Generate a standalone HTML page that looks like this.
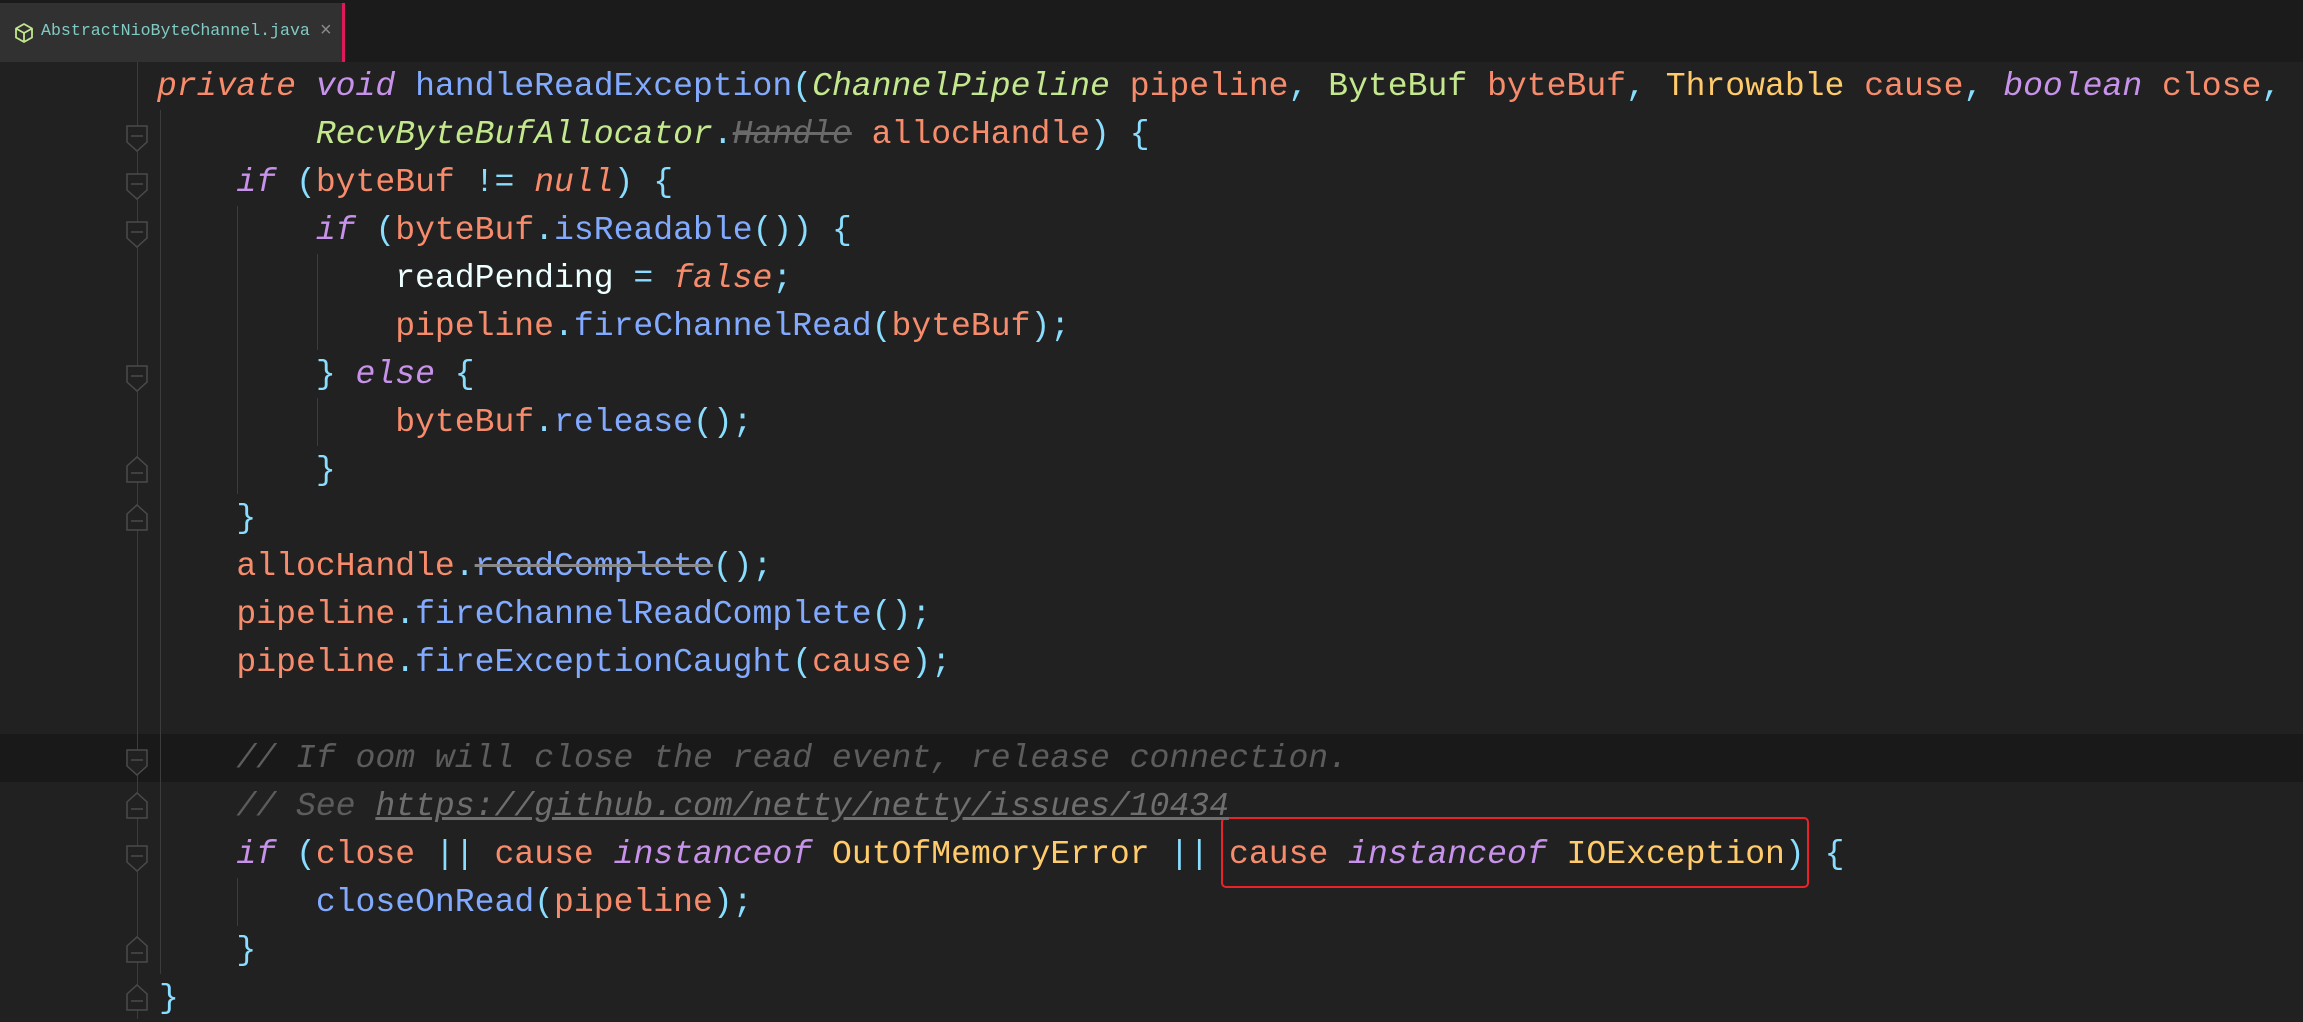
<!DOCTYPE html>
<html><head><meta charset="utf-8"><style>
html,body{margin:0;padding:0;width:2303px;height:1019px;overflow:hidden;background:#212121;}
.tabbar{position:absolute;left:0;top:0;width:2303px;height:62px;background:#1b1b1b;}
.tab{position:absolute;left:0;top:3px;width:342px;height:59px;background:#313131;border-right:3px solid #e0195a;}
.tab .t{position:absolute;left:41px;top:18px;font:16.6px "Liberation Mono",monospace;color:#80cbc4;}
.tab .x{position:absolute;left:320px;top:16px;font:20px "Liberation Sans",sans-serif;color:#8a8a8a;}
.code{position:absolute;left:157px;top:62px;font:33.1px "Liberation Mono",monospace;}
.l{position:absolute;left:0;height:48px;line-height:48px;white-space:pre;}
.cur{position:absolute;left:0;top:734px;width:2303px;height:48px;background:#191919;}
.o{color:#f78c6c}.p{color:#c792ea}.b{color:#82aaff}.c{color:#89ddff}.g{color:#c3e88d}.y{color:#ffcb6b}.w{color:#eeffff}
.i{font-style:italic}.cm{color:#5c5c5c;font-style:italic}
.u{text-decoration:underline;color:#6e6e6e}
.s{text-decoration:line-through;text-decoration-color:#888}
.hd{color:#6a6a6a;font-style:italic;text-decoration:line-through}
.vl{position:absolute;width:1px;background:#3c3c3c;}
.box{position:absolute;left:1221px;top:817px;width:584px;height:67px;border:2px solid #e8232a;border-radius:5px;}
</style></head><body>
<div class="tabbar"><div class="tab">
<svg style="position:absolute;left:14px;top:19px" width="20" height="22" viewBox="0 0 20 22"><path d="M10 2 L18 6.5 V15.5 L10 20 L2 15.5 V6.5 Z M2 6.5 L10 11 L18 6.5 M10 11 V20" fill="none" stroke="#c3e88d" stroke-width="1.8" stroke-linejoin="round"/></svg>
<span class="t">AbstractNioByteChannel.java</span><span class="x">×</span></div></div>
<div class="cur"></div>
<div class="vl" style="left:137px;top:62px;height:957px"></div>
<div class="vl" style="left:160px;top:110px;height:864px"></div>
<div class="vl" style="left:237px;top:206px;height:288px"></div>
<div class="vl" style="left:317px;top:254px;height:96px"></div>
<div class="vl" style="left:317px;top:398px;height:48px"></div>
<div class="vl" style="left:237px;top:878px;height:48px"></div>
<svg style="position:absolute;left:0;top:0" width="200" height="1019">
<defs>
<g id="dn"><path d="M-10 -8 h20 v16 l-10 9 l-10 -9z" fill="#212121" stroke="#4a4a4a" stroke-width="1.5"/><path d="M-6 2h12" stroke="#4a4a4a" stroke-width="1.5"/></g>
<g id="up"><path d="M-10 12 h20 v-16 l-10 -9 l-10 9z" fill="#212121" stroke="#4a4a4a" stroke-width="1.5"/><path d="M-6 3h12" stroke="#4a4a4a" stroke-width="1.5"/></g>
</defs>
<use href="#dn" x="137" y="134"/><use href="#dn" x="137" y="182"/><use href="#dn" x="137" y="230"/><use href="#dn" x="137" y="374"/>
<use href="#up" x="137" y="470"/><use href="#up" x="137" y="518"/>
<use href="#dn" x="137" y="758"/><use href="#up" x="137" y="806"/><use href="#dn" x="137" y="854"/>
<use href="#up" x="137" y="950"/><use href="#up" x="137" y="998"/>
</svg>
<div class="box"></div>
<div class="code">
<div class="l" style="top:0"><span class="o i">private</span> <span class="p i">void</span> <span class="b">handleReadException</span><span class="c">(</span><span class="g i">ChannelPipeline</span> <span class="o">pipeline</span><span class="c">,</span> <span class="g">ByteBuf</span> <span class="o">byteBuf</span><span class="c">,</span> <span class="y">Throwable</span> <span class="o">cause</span><span class="c">,</span> <span class="p i">boolean</span> <span class="o">close</span><span class="c">,</span></div>
<div class="l" style="top:48px">        <span class="g i">RecvByteBufAllocator</span><span class="c">.</span><span class="hd">Handle</span> <span class="o">allocHandle</span><span class="c">) {</span></div>
<div class="l" style="top:96px">    <span class="p i">if</span> <span class="c">(</span><span class="o">byteBuf</span> <span class="c">!=</span> <span class="o i">null</span><span class="c">) {</span></div>
<div class="l" style="top:144px">        <span class="p i">if</span> <span class="c">(</span><span class="o">byteBuf</span><span class="c">.</span><span class="b">isReadable</span><span class="c">()) {</span></div>
<div class="l" style="top:192px">            <span class="w">readPending</span> <span class="c">=</span> <span class="o i">false</span><span class="c">;</span></div>
<div class="l" style="top:240px">            <span class="o">pipeline</span><span class="c">.</span><span class="b">fireChannelRead</span><span class="c">(</span><span class="o">byteBuf</span><span class="c">);</span></div>
<div class="l" style="top:288px">        <span class="c">}</span> <span class="p i">else</span> <span class="c">{</span></div>
<div class="l" style="top:336px">            <span class="o">byteBuf</span><span class="c">.</span><span class="b">release</span><span class="c">();</span></div>
<div class="l" style="top:384px">        <span class="c">}</span></div>
<div class="l" style="top:432px">    <span class="c">}</span></div>
<div class="l" style="top:480px">    <span class="o">allocHandle</span><span class="c">.</span><span class="b s">readComplete</span><span class="c">();</span></div>
<div class="l" style="top:528px">    <span class="o">pipeline</span><span class="c">.</span><span class="b">fireChannelReadComplete</span><span class="c">();</span></div>
<div class="l" style="top:576px">    <span class="o">pipeline</span><span class="c">.</span><span class="b">fireExceptionCaught</span><span class="c">(</span><span class="o">cause</span><span class="c">);</span></div>
<div class="l" style="top:672px">    <span class="cm">// If oom will close the read event, release connection.</span></div>
<div class="l" style="top:720px">    <span class="cm">// See <span class="u">https://github.com/netty/netty/issues/10434</span></span></div>
<div class="l" style="top:768px">    <span class="p i">if</span> <span class="c">(</span><span class="o">close</span> <span class="c">||</span> <span class="o">cause</span> <span class="p i">instanceof</span> <span class="y">OutOfMemoryError</span> <span class="c">||</span> <span class="o">cause</span> <span class="p i">instanceof</span> <span class="y">IOException</span><span class="c">) {</span></div>
<div class="l" style="top:816px">        <span class="b">closeOnRead</span><span class="c">(</span><span class="o">pipeline</span><span class="c">);</span></div>
<div class="l" style="top:864px">    <span class="c">}</span></div>
<div class="l" style="top:912px;left:2px"><span class="c">}</span></div>
</div>
</body></html>
